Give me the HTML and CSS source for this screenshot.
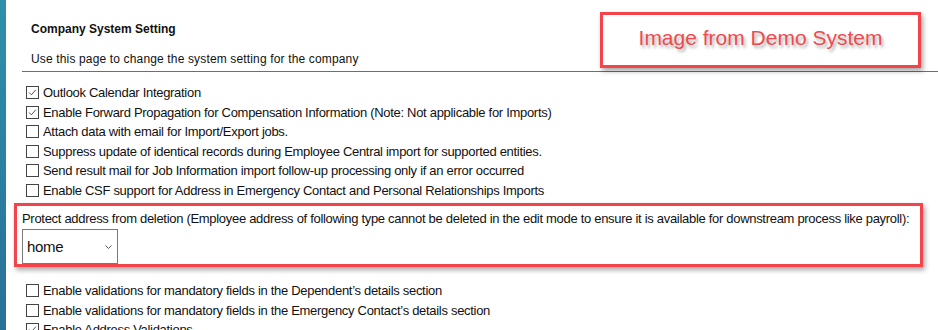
FILE: index.html
```html
<!DOCTYPE html>
<html lang="en">
<head>
    <meta charset="UTF-8">
    <meta name="viewport" content="width=device-width, initial-scale=1.0">
    <title>Company System Setting</title>
    <link rel="stylesheet" href="styles.css">
</head>
<body>
<div class="page">
    <div class="rail"></div>
    <div class="main">
        <div class="header">
            <h1 class="title">Company System Setting</h1>
            <p class="subtitle">Use this page to change the system setting for the company</p>
            <div class="demo-note">Image from Demo System</div>
        </div>

        <ul class="options first">
            <li><span class="box"><svg viewBox="0 0 13 13"><path d="M2.5 6.5 L5.2 9.2 L10.5 3.2" /></svg></span>Outlook Calendar Integration</li>
            <li><span class="box"><svg viewBox="0 0 13 13"><path d="M2.5 6.5 L5.2 9.2 L10.5 3.2" /></svg></span>Enable Forward Propagation for Compensation Information (Note: Not applicable for Imports)</li>
            <li><span class="box"></span>Attach data with email for Import/Export jobs.</li>
            <li><span class="box"></span>Suppress update of identical records during Employee Central import for supported entities.</li>
            <li><span class="box"></span>Send result mail for Job Information import follow-up processing only if an error occurred</li>
            <li><span class="box"></span>Enable CSF support for Address in Emergency Contact and Personal Relationships Imports</li>
        </ul>

        <div class="protect">
            <div class="protect-label">Protect address from deletion (Employee address of following type cannot be deleted in the edit mode to ensure it is available for downstream process like payroll):</div>
            <div class="select">
                <span>home</span>
                <svg class="chevron" viewBox="0 0 7 4"><path d="M0.5 0.5 L3.5 3.5 L6.5 0.5" /></svg>
            </div>
        </div>

        <ul class="options">
            <li><span class="box"></span>Enable validations for mandatory fields in the Dependent’s details section</li>
            <li><span class="box"></span>Enable validations for mandatory fields in the Emergency Contact’s details section</li>
            <li><span class="box"><svg viewBox="0 0 13 13"><path d="M2.5 6.5 L5.2 9.2 L10.5 3.2" /></svg></span>Enable Address Validations</li>
        </ul>
    </div>
</div>
</body>
</html>
```

FILE: styles.css
```css
body {
    margin: 0;
    padding: 0;
    background: white;
    font-family: 'Liberation Sans', Arial, sans-serif;
    color: #111;
    overflow: hidden;
}
.page {
    display: flex;
    min-height: 100vh;
}
.rail {
    width: 6px;
    flex-shrink: 0;
    background: linear-gradient(#2f90a8, #286f98);
}
.main {
    flex: 1;
    min-width: 0;
    padding-left: 16px;
}
.header {
    position: relative;
    height: 72px;
    border-bottom: 1px solid #6e6e6e;
    padding-left: 9px;
    box-sizing: border-box;
}
.title {
    margin: 0;
    padding-top: 22px;
    font-size: 12px;
    line-height: 15px;
    font-weight: bold;
}
.subtitle {
    margin: 15px 0 0;
    font-size: 12px;
    line-height: 15px;
    letter-spacing: 0.15px;
}
.demo-note {
    position: absolute;
    left: 578px;
    top: 12px;
    width: 321px;
    height: 56px;
    padding-bottom: 4px;
    box-sizing: border-box;
    border: 3px solid #f2444a;
    box-shadow: 2px 3px 5px rgba(0,0,0,0.35);
    display: flex;
    align-items: center;
    justify-content: center;
    color: #ee4a4f;
    font-size: 21px;
    text-shadow: 2px 3px 3px rgba(0,0,0,0.3);
    background: white;
}
.options {
    list-style: none;
    margin: 0;
    padding: 0 0 0 4px;
    font-size: 13px;
    letter-spacing: -0.3px;
}
.options.first {
    margin-top: 11px;
}
.options li {
    display: flex;
    align-items: center;
    height: 19.5px;
    white-space: nowrap;
}
.box {
    width: 11px;
    height: 11px;
    border: 1px solid #444;
    margin-right: 4px;
    flex-shrink: 0;
    background: white;
}
.box svg {
    display: block;
    width: 11px;
    height: 11px;
}
.box path {
    fill: none;
    stroke: #444;
    stroke-width: 1.1;
}
.protect {
    margin: 3px 15px 14px -8px;
    border: 3px solid #f2444a;
    box-shadow: 2px 3px 5px rgba(0,0,0,0.35);
    padding: 5px 5px 3px;
    box-sizing: border-box;
    height: 64px;
    font-size: 13px;
    letter-spacing: -0.3px;
    overflow: hidden;
}
.protect-label {
    white-space: nowrap;
    line-height: 16px;
}
.select {
    margin-top: 2px;
    height: 33px;
    width: 85px;
    border: 1px solid #7a7a7a;
    display: flex;
    align-items: center;
    justify-content: space-between;
    padding: 0 5px 0 4px;
    font-size: 15px;
    letter-spacing: -0.3px;
}
.chevron {
    width: 7px;
    height: 4px;
}
.chevron path {
    fill: none;
    stroke: #555;
    stroke-width: 1;
}
```
